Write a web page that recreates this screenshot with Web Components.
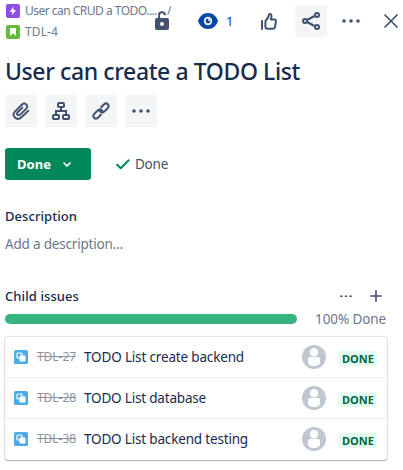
<!DOCTYPE html>
<html lang="en">
<head>
<meta charset="utf-8">
<title>User can create a TODO List</title>
<style>
body{margin:0;background:#fff;overflow:hidden}
</style>
</head>
<body>
<issue-view></issue-view>
<script>
const icons = {
  epic:['0 0 14 14','<rect width="14" height="14" rx="2" fill="#904ee2"/><path d="M7.6 2.8 3.7 7.8h2.7l-.4 3.4 4.1-5.1H7.3z" fill="#fff"/>'],
  story:['0 0 14 14','<rect width="14" height="14" rx="2" fill="#63ba3c"/><path d="M4 3.6q0-.6.6-.6h4.8q.6 0 .6.6V11L7 8.3 4 11z" fill="#fff"/>'],
  subtask:['0 0 14 14','<rect width="14" height="14" rx="1.6" fill="#4bade8"/><rect x="3" y="3" width="5" height="5" rx="1" fill="none" stroke="#fff" stroke-width="1.2"/><rect x="5.5" y="5.5" width="6" height="6" rx="1" fill="#fff"/>'],
  lock:['0 0 14 19','<path d="M4.1 9V3.7C4.1 2.2 5.1 1.3 6.9 1.3s3 .9 3 3" fill="none" stroke="#42526e" stroke-width="2"/><path fill-rule="evenodd" d="M2 7h10a2 2 0 0 1 2 2v8a2 2 0 0 1-2 2H2a2 2 0 0 1-2-2V9a2 2 0 0 1 2-2zm5 4a2 2 0 1 0 0 4 2 2 0 0 0 0-4z" fill="#42526e"/>'],
  eye:['0 0 20 16','<path d="M10 0C5 0 1.5 3.3 0 8c1.5 4.700 5 8 10 8s8.500-3.300 10-8C18.500 3.300 15 0 10 0z" fill="#0747a6"/><circle cx="10" cy="8" r="3.300" fill="#0747a6" stroke="#fff" stroke-width="1.700"/><circle cx="11" cy="7" r="1" fill="#fff"/>'],
  thumb:['0 0 16 17','<path d="M1 8v8" stroke-linecap="round"/><path d="M4.400 13.800V8.700c0-1.800 3.300-3.500 3.300-6.200 0-2 2.800-2 2.800.5 0 1.600-.7 3-.7 3.600h3.700q1.600 0 1.400 1.600l-.9 6q-.2 1.600-1.800 1.600H6.400q-2 0-2-2z" stroke-linejoin="round"/>'],
  share:['0 0 18 18','<path d="m5 8 7.500-4M5 10l7.500 4"/><circle cx="3" cy="9" r="2"/><circle cx="15" cy="3" r="2"/><circle cx="15" cy="15" r="2"/>'],
  more:['0 0 18 4','<g fill="#42526e" stroke="none"><circle cx="2" cy="2" r="1.800"/><circle cx="9" cy="2" r="1.800"/><circle cx="16" cy="2" r="1.800"/></g>'],
  close:['0 0 14 14','<path d="m1 1 12 12M13 1 1 13" stroke-linecap="round" stroke-width="1.700"/>'],
  clip:['0 0 18 18','<path d="M16.300 8.800 9.400 15.300c-4.600 4.100-10.400-1.500-6.300-6l6.700-6.600c3.400-3 7.200.9 4.200 4.200l-5.800 5.700c-2.100 1.700-4.200-.4-2.500-2.400l4.700-4.600" stroke-linecap="round" stroke-width="1.900"/>'],
  tree:['0 0 18 18','<rect x="6" y="1" width="6" height="4" rx="1"/><rect x="1" y="13" width="6" height="4" rx="1"/><rect x="11" y="13" width="6" height="4" rx="1"/><path d="M9 5v4M4 13V9h10v4"/>'],
  link:['0 0 18 18','<path d="M9.200 5.300l2.600-2.800c3-2.700 6.500.8 3.800 3.800l-3.300 3.300c-1.600 1.500-3.600 1-4.700-.6M8.800 12.700l-2.600 2.800c-3 2.700-6.500-.8-3.800-3.800l3.300-3.300c1.600-1.500 3.600-1 4.700.6" stroke-linecap="round"/>'],
  chevron:['0 0 8 5','<path d="m1 1 3 3 3-3" stroke="#fff" stroke-width="1.700" stroke-linecap="round" stroke-linejoin="round"/>'],
  check:['0 0 14 11','<path d="m1.200 5.700 3.500 3.600L12.700 1.300" stroke="#00875a" stroke-width="2" stroke-linecap="round" stroke-linejoin="round"/>'],
  plus:['0 0 12 12','<path d="M6 .8v10.400M.8 6h10.400" stroke-linecap="round" stroke-width="1.600"/>'],
  avatar:['0 0 24 24','<circle cx="12" cy="12" r="12" fill="#c1c7d0"/><circle cx="12" cy="7.300" r="4.200" fill="#fff"/><path d="M6 14q0-2 2-2h8q2 0 2 2v3q0 4-6 4t-6-4z" fill="#fff"/>']
};

class UiIcon extends HTMLElement {
  connectedCallback() {
    const [box, art] = icons[this.getAttribute('name')];
    const [, , w, h] = box.split(' ');
    const width = this.getAttribute('size') || w;
    this.attachShadow({mode:'open'}).innerHTML = `<style>:host{display:block;flex:none}svg{display:block}</style>
      <svg width="${width}" height="${h * width / w}" viewBox="${box}" fill="none" stroke="${/^(epic|story|subtask|lock|eye|avatar)$/.test(this.getAttribute('name')) ? 'none' : '#42526e'}" stroke-width="2">${art}</svg>`;
  }
}
customElements.define('ui-icon', UiIcon);

/* Text that adjusts its tracking to occupy a given advance width. */
class UiText extends HTMLElement {
  connectedCallback() {
    this.attachShadow({mode:'open'}).innerHTML = `<style>:host{display:block;flex:none;white-space:nowrap}span{display:inline-block}:host([struck]) span{text-decoration:line-through}</style><span><slot></slot></span>`;
    const span = this.shadowRoot.querySelector('span');
    const target = Number(this.getAttribute('fit'));
    const gap = (target - span.getBoundingClientRect().width) / this.textContent.length;
    span.style.letterSpacing = gap.toFixed(3) + 'px';
    this.style.width = target + 'px';
  }
}

class IconButton extends HTMLElement {
  connectedCallback() {
    this.attachShadow({mode:'open'}).innerHTML = `<style>
      :host{display:grid;place-items:center;width:32px;height:32px;border-radius:3px;flex:none}
      :host([filled]){background:#f4f5f7}</style><slot></slot>`;
  }
}
customElements.define('icon-button', IconButton);

class IssueHeader extends HTMLElement {
  connectedCallback() {
    this.attachShadow({mode:'open'}).innerHTML = `<style>
      :host{display:flex;position:relative;height:42px;color:#6b778c;font-size:12px;line-height:20px}
      .crumbs{display:grid;grid-template-rows:21px 21px;width:190px}
      .crumb{display:flex;align-items:center;gap:5px;padding-left:6px}
      .slash{margin-left:5px}
      .lock{position:absolute;left:155px;top:11px}
      .actions{display:flex;align-items:center;flex:none;padding-left:8px}
      .count{margin-left:8px;color:#0747a6;font-size:13px}
      .thumb{margin-left:19px}.share{margin-left:10px}.more{margin-left:8px}.close{margin-left:8px}
    </style>
    <div class="crumbs">
      <div class="crumb"><ui-icon name="epic"></ui-icon><ui-text fit="132">User can CRUD a TODO....</ui-text><span class="slash">/</span></div>
      <div class="crumb"><ui-icon name="story"></ui-icon><ui-text fit="33">TDL-4</ui-text></div>
    </div>
    <ui-icon class="lock" name="lock"></ui-icon>
    <div class="actions"><ui-icon name="eye"></ui-icon><ui-text class="count" fit="8">1</ui-text>
      <icon-button class="thumb"><ui-icon name="thumb"></ui-icon></icon-button>
      <icon-button class="share" filled><ui-icon name="share"></ui-icon></icon-button>
      <icon-button class="more"><ui-icon name="more"></ui-icon></icon-button>
      <icon-button class="close"><ui-icon name="close"></ui-icon></icon-button></div>`;
    this.shadowRoot.querySelector('.crumbs').style.flex = '0 0 190px';
  }
}

class StatusButton extends HTMLElement {
  connectedCallback() {
    this.attachShadow({mode:'open'}).innerHTML = `<style>
      :host{display:flex;align-items:center;gap:12px;box-sizing:border-box;width:86px;height:32px;padding-left:12px;background:#00875a;color:#fff;border-radius:3px;font-weight:700;font-size:13px}
    </style><ui-text fit="34">Done</ui-text><ui-icon name="chevron"></ui-icon>`;
  }
}

class ChildIssue extends HTMLElement {
  connectedCallback() {
    const a = n => this.getAttribute(n);
    this.attachShadow({mode:'open'}).innerHTML = `<style>
      :host{display:flex;align-items:center;height:40px;padding:0 10px 0 9px;color:#172b4d;font-size:13.500px;border-bottom:1px solid #ebecf0}
      :host(:last-child){border-bottom-color:transparent}
      .key{margin-left:9px;color:#8993a4;font-size:12px}
      .summary{margin:0 auto 0 8px}
      .badge{margin:3px 0 0 12px;box-sizing:border-box;width:39px;height:15px;border-radius:3px;background:#e3fcef;color:#006644;font-size:11px;line-height:15px;font-weight:700;padding-left:4px}
    </style>
    <ui-icon name="subtask"></ui-icon><ui-text class="key" struck fit="39">${a('key')}</ui-text>
    <ui-text class="summary" fit="${a('fit')}">${a('summary')}</ui-text>
    <ui-icon name="avatar"></ui-icon><div class="badge"><ui-text fit="32">DONE</ui-text></div>`;
  }
}

class IssueView extends HTMLElement {
  connectedCallback() {
    this.attachShadow({mode:'open'}).innerHTML = `<style>
      :host{display:block;width:403px;height:470px;background:#fff;color:#172b4d;font-family:"Noto Sans","Open Sans",sans-serif;font-size:13.500px;line-height:20px}
      main{padding-left:5px}
      .title{margin-top:14px;font-size:23px;line-height:30px;font-weight:500}
      .tools{display:flex;gap:8px;margin-top:9px}
      .status{display:flex;align-items:center;margin-top:21px;color:#42526e}
      .status ui-icon{margin:0 5px 0 25px}
      .heading{font-size:13px;font-weight:500}
      .description{margin-top:26px}
      .hint{margin-top:8px;color:#6b778c}
      .children{display:flex;align-items:center;margin-top:32px;height:20px}
      .children .more{margin-left:auto}.children .plus{margin:0 21px 0 18px}
      .progress{display:flex;align-items:center;gap:18px;height:20px;margin-top:3px;color:#6b778c}
      .bar{width:292px;height:10px;border-radius:5px;background:#36b37e}
      .list{margin-top:8px;width:382px;height:123px;border-radius:3px;box-shadow:0 1px 1px rgba(9,30,66,.25),0 0 1px 1px rgba(9,30,66,.13)}
    </style>
    <issue-header></issue-header>
    <main>
      <ui-text class="title" fit="295">User can create a TODO List</ui-text>
      <div class="tools"><icon-button filled><ui-icon name="clip"></ui-icon></icon-button><icon-button filled><ui-icon name="tree"></ui-icon></icon-button><icon-button filled><ui-icon name="link"></ui-icon></icon-button><icon-button filled><ui-icon name="more"></ui-icon></icon-button></div>
      <div class="status"><status-button></status-button><ui-icon name="check"></ui-icon><ui-text fit="33">Done</ui-text></div>
      <ui-text class="heading description" fit="72">Description</ui-text>
      <ui-text class="hint" fit="118">Add a description...</ui-text>
      <div class="children"><ui-text class="heading" fit="74">Child issues</ui-text><ui-icon class="more" name="more" size="12"></ui-icon><ui-icon class="plus" name="plus"></ui-icon></div>
      <div class="progress"><div class="bar"></div><ui-text fit="71">100% Done</ui-text></div>
      <div class="list">
        <child-issue key="TDL-27" summary="TODO List create backend" fit="160"></child-issue>
        <child-issue key="TDL-28" summary="TODO List database" fit="122"></child-issue>
        <child-issue key="TDL-38" summary="TODO List backend testing" fit="164"></child-issue>
      </div>
    </main>`;
  }
}
customElements.define('issue-view', IssueView);
customElements.define('issue-header', IssueHeader);
customElements.define('status-button', StatusButton);
customElements.define('child-issue', ChildIssue);
customElements.define('ui-text', UiText);
</script>
</body>
</html>
